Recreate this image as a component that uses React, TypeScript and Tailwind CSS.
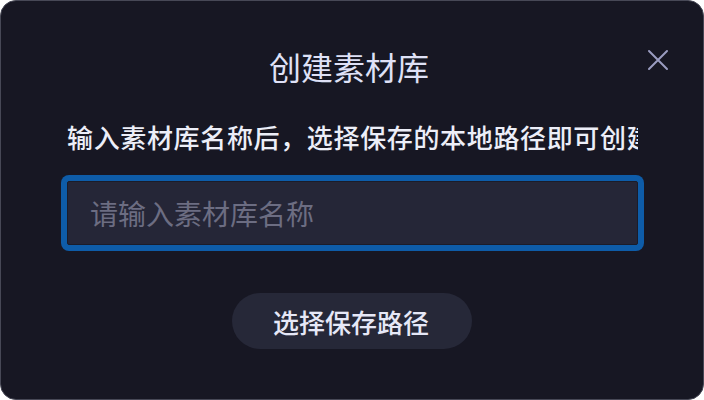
export default function App() {
  return (
    <div className="w-[704px] h-[400px] bg-white">
      <div
        className="relative w-[704px] h-[400px] rounded-[16px] border border-[#474856] bg-[#171723] flex flex-col items-center"
        style={{ fontFamily: '"Noto Sans CJK SC", "Noto Sans", sans-serif' }}
      >
        <button className="absolute top-[48px] right-[34px] w-[22px] h-[22px] text-[#9a9cc0]" aria-label="关闭">
          <svg viewBox="0 0 22 22" width="22" height="22" fill="none" stroke="currentColor" strokeWidth="2" strokeLinecap="round">
            <path d="M2 2 L20 20 M20 2 L2 20" />
          </svg>
        </button>

        <h1 className="mt-[45px] h-[40px] leading-[40px] text-[32px] font-normal text-[#dfe1f6] pr-[6px]">创建素材库</h1>

        <div className="mt-[34px] w-full pl-[66px] pr-[65px]">
          <p className="h-[34px] leading-[34px] text-[26px] font-medium tracking-[0.65px] text-[#eceef8] whitespace-nowrap overflow-hidden">
            输入素材库名称后，选择保存的本地路径即可创建
          </p>
        </div>

        <div className="mt-[21px] w-full pl-[60px] pr-[59px]">
          <div className="p-[6px] rounded-[8px] bg-[#0e5ca8]">
            <input
              className="block w-full h-[64px] rounded-[2px] border border-[#1b1c29] bg-[#252637] pl-[22px] text-[28px] text-[#e4e6f8] placeholder:text-[#6c6d82] outline-none"
              placeholder="请输入素材库名称"
            />
          </div>
        </div>

        <button className="mt-[42px] w-[240px] h-[56px] rounded-full bg-[#262838] text-[26px] font-medium text-[#e6e8f7] pr-[2px]">
          选择保存路径
        </button>
      </div>
    </div>
  );
}
